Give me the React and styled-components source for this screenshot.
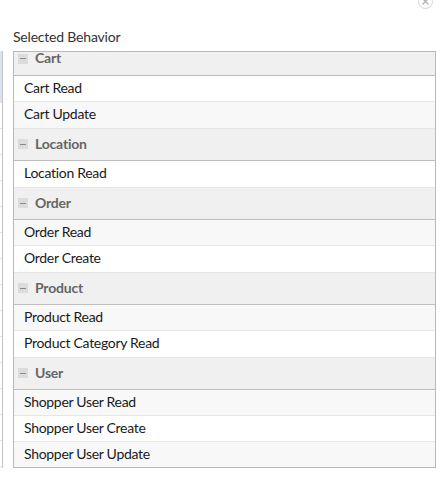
import styled, { createGlobalStyle } from "styled-components";

const GlobalStyle = createGlobalStyle`
  html, body {
    margin: 0;
    padding: 0;
    background: #ffffff;
    overflow: hidden;
  }
  body {
    font-family: "Lato", "Liberation Sans", sans-serif;
    color: #222;
  }
`;

const Page = styled.div`
  position: relative;
  width: 448px;
  height: 477px;
  display: flex;
  align-items: flex-start;
  padding-top: 51px;
  box-sizing: border-box;
`;

const CloseButton = styled.div`
  position: absolute;
  top: -6px;
  left: 418px;
  width: 13px;
  height: 13px;
  border: 1px solid #d4d4d4;
  border-radius: 50%;
  display: flex;
  align-items: center;
  justify-content: center;
`;

const SideList = styled.div`
  width: 2px;
  height: 417px;
  border-right: 1px solid #c4c4c4;
  overflow: hidden;
  margin-right: 10px;
`;

const SideRow = styled.div`
  height: 26px;
  border-bottom: 1px solid #e2e2e2;
  box-sizing: border-box;
  background: ${(p) => (p.$selected ? "#d9e4f2" : "#ffffff")};
`;

const Column = styled.div`
  display: flex;
  flex-direction: column;
  margin-top: -22px;
`;

const Label = styled.div`
  font-size: 14px;
  letter-spacing: -0.2px;
  color: #333;
  height: 22px;
  line-height: 16px;
`;

const ListBox = styled.div`
  width: 423px;
  height: 417px;
  border: 1px solid #b9b9b9;
  box-sizing: border-box;
  overflow: hidden;
`;

const Inner = styled.div`
  margin-top: -9px;
`;

const GroupHeader = styled.div`
  height: 33px;
  box-sizing: border-box;
  border-bottom: 1px solid #bdbdbd;
  border-top: ${(p) => (p.$first ? "none" : "1px solid #e6e6e6")};
  background: #f0f0f0;
  display: flex;
  align-items: center;
  gap: 7px;
  padding: 0 0 3px 4px;
  font-size: 14px;
  letter-spacing: -0.2px;
  font-weight: 700;
  color: #666;
`;

const Toggle = styled.span`
  width: 10px;
  height: 10px;
  margin-top: 2px;
  background: #dcdcdc;
  display: flex;
  align-items: center;
  justify-content: center;

  &::before {
    content: "";
    width: 6px;
    height: 1px;
    background: #8a8a8a;
  }
`;

const Item = styled.div`
  height: 26px;
  box-sizing: border-box;
  border-bottom: ${(p) => (p.$last ? "none" : "1px solid #e6e6e6")};
  background: ${(p) => (p.$alt ? "#f8f8f8" : "#ffffff")};
  display: flex;
  align-items: center;
  padding: 0 0 3px 10px;
  font-size: 14px;
  letter-spacing: -0.3px;
  color: #1a1a1a;
`;

const groups = [
  { name: "Cart", items: ["Cart Read", "Cart Update"] },
  { name: "Location", items: ["Location Read"] },
  { name: "Order", items: ["Order Read", "Order Create"] },
  { name: "Product", items: ["Product Read", "Product Category Read"] },
  {
    name: "User",
    items: ["Shopper User Read", "Shopper User Create", "Shopper User Update"],
  },
];

const sideRows = [true, true, false, false, false, false, false, false, false, false, false, false, false, false, false, false];

const App = () => {
  let index = 0;
  return (
    <>
      <GlobalStyle />
      <Page>
        <CloseButton>
          <svg width="9" height="9" viewBox="0 0 9 9">
            <path d="M1.5 1.5 L7.5 7.5 M7.5 1.5 L1.5 7.5" stroke="#b5b5b5" strokeWidth="1.4" />
          </svg>
        </CloseButton>
        <SideList>
          {sideRows.map((sel, i) => (
            <SideRow key={i} $selected={sel} />
          ))}
        </SideList>
        <Column>
          <Label>Selected Behavior</Label>
          <ListBox>
            <Inner>
              {groups.map((g, gi) => (
                <div key={g.name}>
                  <GroupHeader $first={gi === 0}>
                    <Toggle />
                    {g.name}
                  </GroupHeader>
                  {g.items.map((it, ii) => {
                    const alt = index % 2 === 1;
                    index += 1;
                    return (
                      <Item
                        key={it}
                        $alt={alt}
                        $last={ii === g.items.length - 1}
                      >
                        {it}
                      </Item>
                    );
                  })}
                </div>
              ))}
            </Inner>
          </ListBox>
        </Column>
      </Page>
    </>
  );
};

export default App;
